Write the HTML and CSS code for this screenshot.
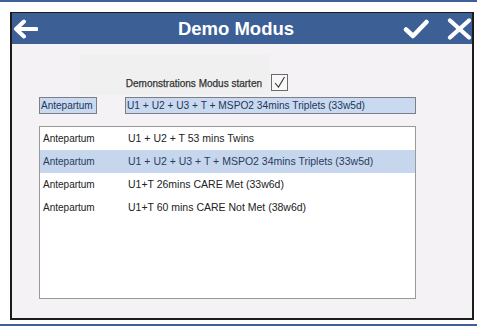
FILE: index.html
```html
<!DOCTYPE html>
<html lang="de">
<head>
<meta charset="UTF-8" />
<title>Demo Modus</title>
<link rel="stylesheet" href="styles.css">
</head>
<body>

<div class="streifen"></div>

<div class="fenster">
  <div class="kopf">
    <div class="links">
      <svg class="icon-zurueck" width="26" height="20" viewBox="0 0 26 20">
        <path d="M24.5 10 H4 M12 2.5 L4 10 L12 17.5" fill="none" stroke="#fff" stroke-width="4" stroke-linecap="round" stroke-linejoin="round"/>
      </svg>
    </div>
    <h1>Demo Modus</h1>
    <div class="rechts">
      <svg width="26" height="20" viewBox="0 0 26 20">
        <path d="M3 10.5 L10 17 L23.5 3" fill="none" stroke="#fff" stroke-width="4.5" stroke-linecap="round" stroke-linejoin="round"/>
      </svg>
      <svg width="25" height="22" viewBox="0 0 25 22">
        <path d="M3 2.5 L22 19.5 M22 2.5 L3 19.5" fill="none" stroke="#fff" stroke-width="4.2" stroke-linecap="round"/>
      </svg>
    </div>
  </div>

  <div class="inhalt">
    <div class="demo-zeile">
      <div class="demo-feld">Demonstrations Modus starten</div>
      <div class="kontrollkasten">
        <svg width="15" height="15" viewBox="0 0 15 15">
          <path d="M3 8 L6.5 12 L12.5 2" fill="none" stroke="#333" stroke-width="1.1"/>
        </svg>
      </div>
    </div>

    <div class="auswahl">
      <div class="knopf">Antepartum</div>
      <div class="feld">U1 + U2 + U3 + T + MSPO2 34mins Triplets (33w5d)</div>
    </div>

    <div class="liste">
      <div class="zeile"><span class="typ">Antepartum</span><span>U1 + U2 + T 53 mins Twins</span></div>
      <div class="zeile aktiv"><span class="typ">Antepartum</span><span>U1 + U2 + U3 + T + MSPO2 34mins Triplets (33w5d)</span></div>
      <div class="zeile"><span class="typ">Antepartum</span><span>U1+T 26mins CARE Met (33w6d)</span></div>
      <div class="zeile"><span class="typ">Antepartum</span><span>U1+T 60 mins CARE Not Met (38w6d)</span></div>
    </div>
  </div>
</div>

<div class="streifen unten"></div>

</body>
</html>
```

FILE: styles.css
```css
body {
  margin: 0;
  background-color: #fff;
  font-family: "Liberation Sans", Arial, sans-serif;
  width: 477px;
  height: 326px;
  overflow: hidden;
}
.streifen {
  height: 2px;
  background-color: #3d6098;
}
.streifen.unten {
  margin-top: 4px;
}
.fenster {
  margin: 10px 0 0 10px;
  width: 460px;
  height: 305px;
  border: 2px solid #1c1c1c;
  border-top-width: 1px;
  background-color: #f5f2f6;
  display: flex;
  flex-direction: column;
}
.kopf {
  height: 31px;
  background-color: #3c5f96;
  display: grid;
  grid-template-columns: 1fr auto 1fr;
  align-items: center;
}
.kopf h1 {
  margin: 0 12px 0 0;
  font-size: 18.5px;
  font-weight: bold;
  color: #fff;
}
.links {
  display: flex;
  align-items: center;
}
.rechts {
  display: flex;
  justify-content: flex-end;
  align-items: center;
  gap: 18px;
}
.rechts svg {
  display: block;
}
.icon-zurueck {
  display: block;
}
.inhalt {
  flex: 1;
  padding: 11px 0 0 27px;
}
.demo-zeile {
  display: flex;
  align-items: flex-end;
  margin-left: 41px;
}
.demo-feld {
  width: 190px;
  height: 40px;
  box-sizing: border-box;
  padding: 23px 8px 0 0;
  text-align: right;
  background-color: #f0f0f1;
  font-size: 10px;
  color: #333;
  -webkit-text-stroke: 0.25px #333;
}
.kontrollkasten {
  width: 15px;
  height: 15px;
  border: 1px solid #6a6a6a;
  background-color: #f8f8f8;
  margin: 0 0 4px 1px;
}
.kontrollkasten svg {
  display: block;
}
.auswahl {
  display: flex;
  gap: 28px;
  margin-top: 2px;
  height: 17px;
}
.knopf, .feld {
  box-sizing: border-box;
  height: 17px;
  border: 1px solid #7b7f86;
  background-color: #c9d9ef;
  font-size: 10px;
  color: #22365a;
  line-height: 15px;
}
.knopf {
  width: 58px;
  padding-left: 1px;
}
.feld {
  width: 291px;
  padding-left: 1px;
  font-size: 10.2px;
}
.liste {
  margin-top: 12px;
  width: 377px;
  height: 173px;
  box-sizing: border-box;
  border: 1px solid #999;
  background-color: #fff;
}
.zeile {
  height: 23px;
  line-height: 23px;
  display: flex;
  align-items: baseline;
  padding-left: 3px;
  font-size: 10.5px;
  color: #222;
}
.zeile.aktiv {
  background-color: #c6d6ed;
  color: #2a3c5e;
}
.typ {
  width: 85px;
  font-size: 10px;
}
```
